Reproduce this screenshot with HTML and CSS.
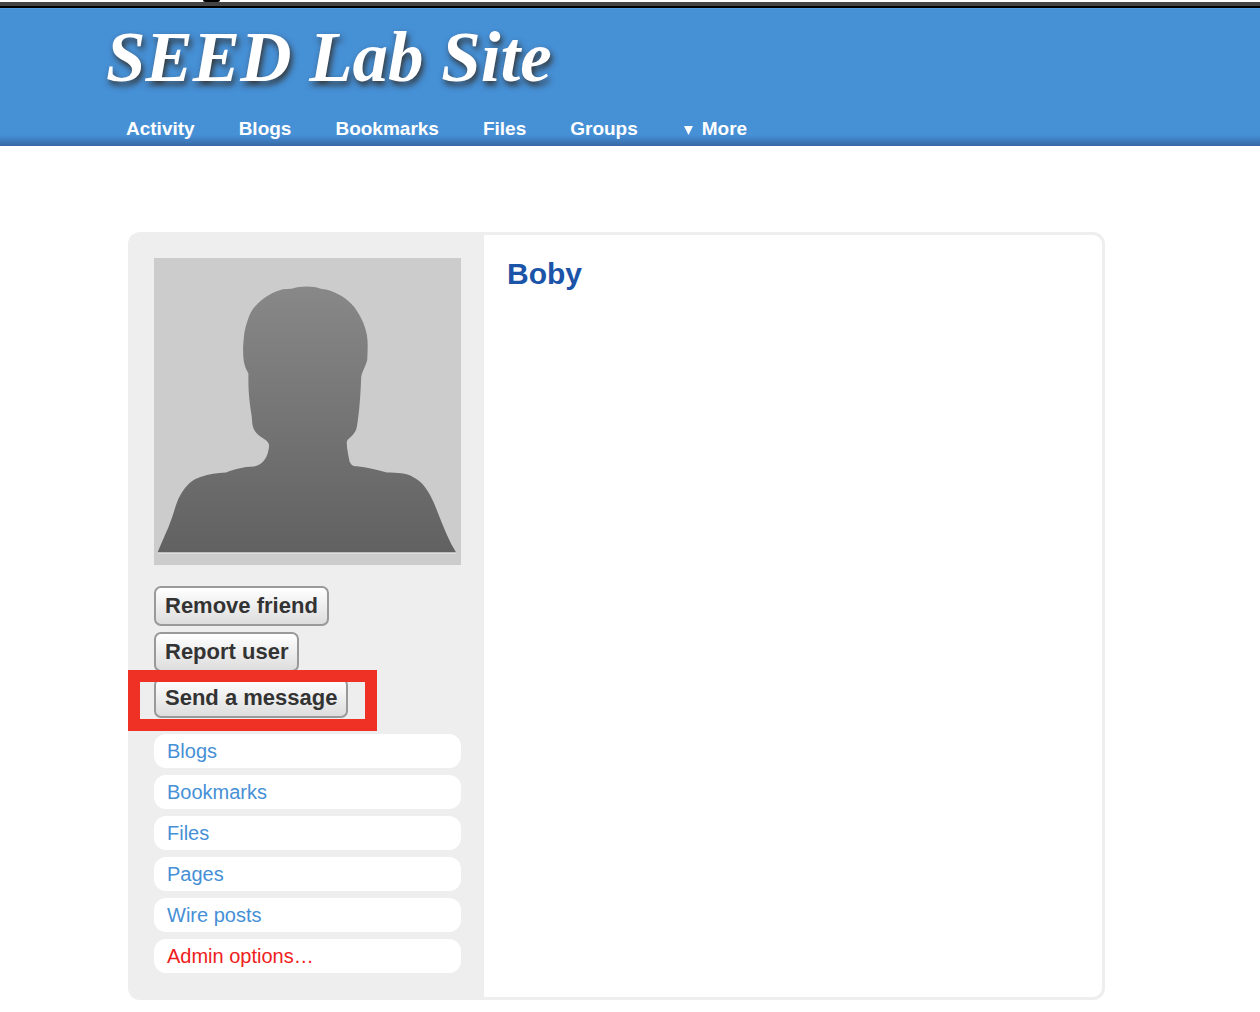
FILE: index.html
```html
<!DOCTYPE html>
<html lang="en">
<head>
<meta charset="utf-8">
<title>Boby : SEED Lab Site</title>
<link rel="stylesheet" href="styles.css">
</head>
<body>
<div class="edge"><span class="edge-mark"></span></div>
<div class="topbar"></div>
<header class="header">
  <h1 class="site-title"><a href="#">SEED Lab Site</a></h1>
  <nav class="site-nav">
    <a href="#">Activity</a>
    <a href="#">Blogs</a>
    <a href="#">Bookmarks</a>
    <a href="#">Files</a>
    <a href="#">Groups</a>
    <a href="#" class="more"><svg class="caret" viewBox="0 0 9 9" aria-hidden="true"><path d="M0 0H9L4.500 9Z" fill="currentColor"/></svg>More</a>
  </nav>
</header>
<main class="profile">
  <aside class="owner">
    <svg class="avatar" viewBox="104 99 920 920" role="img" aria-label="Boby">
      <defs>
        <linearGradient id="shade" x1="0" y1="0" x2="0" y2="1">
          <stop offset="0" stop-color="#888"/>
          <stop offset="1" stop-color="#616161"/>
        </linearGradient>
      </defs>
      <rect x="104" y="99" width="920" height="920" fill="#ccc"/>
      <path d="M115 983H1009" stroke="#ddd" stroke-width="6"/>
      <path fill="url(#shade)" d="M115 981C128 948 145 915 157 880C166 855 170 832 184 808C200 780 218 763 243 755C270 746 293 743 320 742C345 732 370 725 404 724C432 718 446 696 449 662C448 645 428 641 413 626C401 613 398 602 397 575C390 530 386 500 387 445C373 420 371 405 371 365C373 345 373 325 378 308C385 283 393 258 408 243C430 218 460 201 490 193L516 191C545 182 580 182 604 191L623 194C654 203 681 219 703 244C720 268 736 295 742 330C746 355 744 380 743 404C738 425 728 438 725 455C723 505 720 560 712 605C707 630 688 638 682 648C680 665 687 690 690 709C694 719 700 724 712 723C742 727 772 732 802 742C833 742 860 744 880 755C909 769 927 797 943 833C956 865 969 900 982 929Q993 955 1009 981Z"/>
    </svg>
    <ul class="actions">
      <li><button type="button">Remove friend</button></li>
      <li><button type="button">Report user</button></li>
      <li class="marked"><button type="button">Send a message</button></li>
    </ul>
    <ul class="menu">
      <li><a href="#">Blogs</a></li>
      <li><a href="#">Bookmarks</a></li>
      <li><a href="#">Files</a></li>
      <li><a href="#">Pages</a></li>
      <li><a href="#">Wire posts</a></li>
      <li><a href="#" class="admin">Admin options…</a></li>
    </ul>
  </aside>
  <section class="details">
    <h2>Boby</h2>
  </section>
</main>
</body>
</html>
```
FILE: styles.css
```css
*,
*::after {
  box-sizing: border-box;
}

body {
  margin: 0;
  background: #fff;
  font-family: "Liberation Sans", Arial, sans-serif;
}

a {
  text-decoration: none;
}

ul {
  margin: 0;
  padding: 0;
  list-style: none;
}

.edge {
  height: 2px;
  padding-left: 203px;
  overflow: hidden;
}

.edge-mark {
  display: block;
  width: 17px;
  height: 2px;
  border-radius: 0 0 8px 8px;
  background: #000;
}

.topbar {
  height: 6px;
  background: #444;
  border-bottom: 2px solid #000;
}

.header {
  height: 138px;
  padding: 8px 0 0 106px;
  background: linear-gradient(to bottom, #4690d6 0, #4690d6 126px, #3565a0 138px);
  border-top: 1px solid #5198dd;
}

.site-title {
  margin: 0;
  font: italic bold 71px/80px "Liberation Serif", "Times New Roman", serif;
}

.site-title a {
  color: #fff;
  text-shadow: 2px 4px 6px #333;
}

.site-nav {
  display: flex;
  gap: 44px;
  margin-top: 21px;
  padding-left: 20px;
  font-size: 19px;
  font-weight: bold;
  line-height: 22px;
}

.site-nav a {
  color: #fff;
}

.more {
  display: flex;
  align-items: center;
  gap: 9px;
}

.caret {
  width: 9px;
  height: 9px;
  margin: 3px 0 0 2px;
}

.profile {
  display: flex;
  margin: 86px 155px 12px 128px;
  border: 3px solid #eee;
  border-radius: 12px;
}

.owner {
  flex: none;
  width: 353px;
  padding: 23px 23px 24px;
  background: #eee;
}

.avatar {
  display: block;
  width: 100%;
}

.actions {
  display: grid;
  justify-items: start;
  gap: 6px;
  margin: 21px 0 16px;
}

.actions button {
  display: block;
  height: 40px;
  padding: 0 9px;
  border: 2px solid #999;
  border-radius: 7px;
  background: linear-gradient(to bottom, #fff, #ddd);
  color: #333;
  font: bold 22px/26px "Liberation Sans", Arial, sans-serif;
}

.marked {
  position: relative;
}

.marked::after {
  content: "";
  position: absolute;
  top: -8px;
  left: -26px;
  width: 249px;
  height: 61px;
  border: 12px solid #ee3124;
  pointer-events: none;
}

.menu {
  display: grid;
  gap: 7px;
}

.menu a {
  display: block;
  padding: 0 13px;
  border-radius: 12px;
  background: #fff;
  color: #4690d6;
  font-size: 20px;
  line-height: 34px;
}

.menu .admin {
  color: #ee2020;
}

.details {
  flex: 1;
  padding: 22px 23px;
}

.details h2 {
  margin: 0;
  color: #1c54a8;
  font-size: 30px;
  line-height: 34px;
}
```
